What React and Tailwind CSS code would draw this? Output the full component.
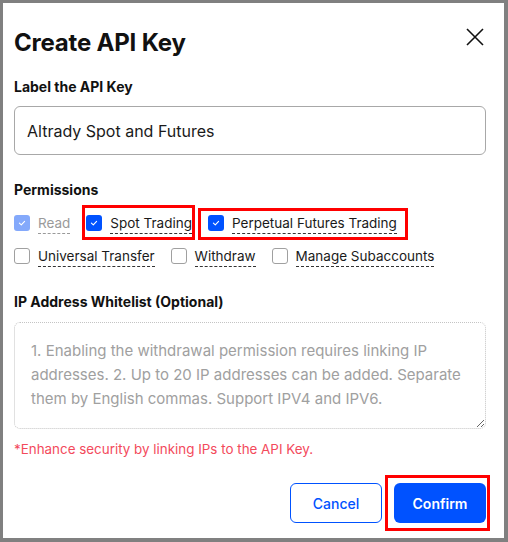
import React from "react";

function Check({ color = "bg-[#0052ff]" }) {
  return (
    <span className={`flex h-4 w-4 shrink-0 items-center justify-center rounded-[3px] ${color}`}>
      <svg width="10" height="10" viewBox="0 0 10 10" fill="none">
        <path d="M2.4 5.2 L4.3 6.9 L7.6 3.4" stroke="white" strokeWidth="1.1" strokeLinecap="round" strokeLinejoin="round" />
      </svg>
    </span>
  );
}

function Empty() {
  return <span className="h-4 w-4 shrink-0 rounded-[3px] border border-[#a0a0a0] bg-white" />;
}

function Item({ box, label, muted, children }) {
  return (
    <div className="relative flex h-6 items-center gap-2">
      {box}
      <span
        className={`border-b border-dashed leading-[20px] ${
          muted ? "border-[#9a9a9a] text-[#9a9a9a]" : "border-[#333] text-[#1a1a1a]"
        }`}
      >
        {label}
      </span>
      {children}
    </div>
  );
}

export default function App() {
  return (
    <div
      className="h-[542px] w-[508px] bg-[#808080] pt-[3px] pl-[3px] pr-[4px] pb-[4px]"
      style={{ fontFamily: "Inter, 'Noto Sans', sans-serif" }}
    >
      <div className="flex h-full flex-col bg-white pt-[24px] pl-[11px] pr-[18px]">
        <div className="flex items-start justify-between">
          <h1 className="text-[24px] font-bold leading-[32px] tracking-[-0.2px] text-[#111]">Create API Key</h1>
          <svg width="18" height="18" viewBox="0 0 18 18" className="mt-[1px] mr-[2px]">
            <path d="M1 1 L17 17 M17 1 L1 17" stroke="#111" strokeWidth="1.6" />
          </svg>
        </div>

        <div className="mt-[18px] text-[14px] font-bold leading-[20px] text-[#111]">Label the API Key</div>
        <div className="mt-[9px] flex h-[49px] items-center rounded-[6px] border border-[#a8a8a8] px-[12px] text-[16px] text-[#1a1a1a]">
          Altrady Spot and Futures
        </div>

        <div className="mt-[25px] text-[14px] font-bold leading-[20px] text-[#111]">Permissions</div>
        <div className="mt-[11px] flex flex-wrap gap-x-4 gap-y-[9px] text-[13.5px]">
          <Item box={<Check color="bg-[#84a9fb]" />} label="Read" muted />
          <Item box={<Check />} label="Spot Trading">
            <div className="pointer-events-none absolute -left-[4px] -right-[3px] -top-[6px] -bottom-[5px] border-[3px] border-[#ff0000]" />
          </Item>
          <Item box={<Check />} label="Perpetual Futures Trading">
            <div className="pointer-events-none absolute -left-[10px] -right-[11px] -top-[3px] -bottom-[5px] border-[3px] border-[#ff0000]" />
          </Item>
          <Item box={<Empty />} label="Universal Transfer" />
          <Item box={<Empty />} label="Withdraw" />
          <Item box={<Empty />} label="Manage Subaccounts" />
        </div>

        <div className="mt-[24px] text-[14px] font-bold leading-[20px] text-[#111]">IP Address Whitelist (Optional)</div>
        <textarea
          wrap="off"
          className="mt-[10px] h-[107px] w-full resize-y overflow-hidden rounded-[6px] border border-dotted border-[#c4c4c4] pl-[16px] pr-[4px] pt-[16px] text-[15px] leading-[24px] text-[#1a1a1a] outline-none placeholder:text-[#a0a0a0]"
          style={{ fontFamily: "Inter, 'Noto Sans', sans-serif" }}
          placeholder={"1. Enabling the withdrawal permission requires linking IP\naddresses. 2. Up to 20 IP addresses can be added. Separate\nthem by English commas. Support IPV4 and IPV6."}
        />
        <div className="mt-[10px] text-[13.4px] leading-[20px] text-[#f34a5c]">*Enhance security by linking IPs to the API Key.</div>

        <div className="mt-[24px] flex justify-end gap-3">
          <button className="h-10 w-[92px] rounded-[6px] border border-[#0052ff] bg-white text-[14px] font-medium text-[#0052ff]">
            Cancel
          </button>
          <div className="relative">
            <button className="h-10 w-[92px] rounded-[6px] bg-[#0052ff] text-[14px] font-semibold text-white">
              Confirm
            </button>
            <div className="pointer-events-none absolute -left-[9px] -right-[4px] -top-[8px] -bottom-[8px] border-[3px] border-[#ff0000]" />
          </div>
        </div>
      </div>
    </div>
  );
}
